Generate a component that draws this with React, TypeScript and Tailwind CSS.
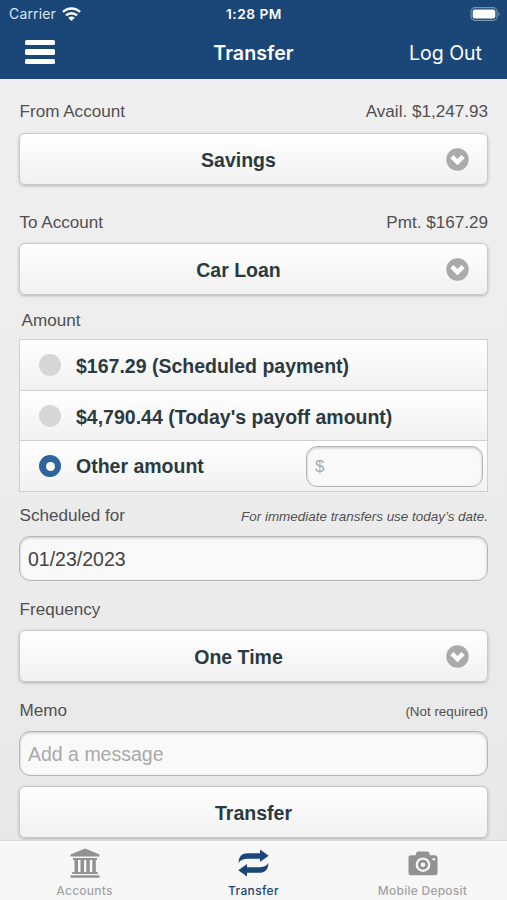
import type { ReactNode } from 'react';

function SelectIcon() {
  return (
    <svg className="h-[23px] w-[23px]" viewBox="0 0 23 23">
      <circle cx="11.5" cy="11.5" r="11.2" fill="#aaaaaa" />
      <path d="M5.9 8.7 L11.5 14.1 L17.1 8.7" fill="none" stroke="#fff" strokeWidth="4.4" />
    </svg>
  );
}

function FieldLabel({ text, children }: { text: string; children?: ReactNode }) {
  return (
    <div className="flex h-5 items-center justify-between pl-[0.5px] text-[17.1px] leading-5 whitespace-nowrap">
      <span>{text}</span>
      {children}
    </div>
  );
}

function SelectButton({ text, icon = true }: { text: string; icon?: boolean }) {
  return (
    <button className="grid h-[52px] w-full shrink-0 grid-cols-[1fr_auto_1fr] items-center rounded-[6px] border border-[#c9c9c9] bg-linear-to-b from-white to-[#f1f1f1] text-[19.5px] leading-6 font-bold text-[#2b3a40] shadow-[0_1px_3px_rgba(0,0,0,0.25)]">
      <span />
      <span className={icon ? 'pt-px pr-[30px]' : 'pt-px'}>{text}</span>
      {icon ? (
        <span className="flex justify-end pr-[18px]">
          <SelectIcon />
        </span>
      ) : (
        <span />
      )}
    </button>
  );
}

function Option({ text, checked, children }: { text: string; checked?: boolean; children?: ReactNode }) {
  return (
    <div className="flex flex-1 items-center border-b border-[#cfcfcf] bg-linear-to-b from-white to-[#f1f1f1] pr-[4px] pl-[19px] last:border-b-0">
      {checked ? (
        <span className="flex h-[22px] w-[22px] items-center justify-center rounded-full bg-[#2c6599]">
          <span className="h-[9px] w-[9px] rounded-full bg-white" />
        </span>
      ) : (
        <span className="h-[22px] w-[22px] rounded-full bg-[#d6d6d6]" />
      )}
      <span className={`ml-[15px] flex-1 text-[19.5px] leading-6 font-bold whitespace-nowrap text-[#2b3a40] ${checked ? '' : 'pt-[2px]'}`}>{text}</span>
      {children}
    </div>
  );
}

function Tab({ text, active, children }: { text: string; active?: boolean; children: ReactNode }) {
  return (
    <div className={`flex flex-1 flex-col items-center pt-[6px] ${active ? 'text-[#1a4777]' : 'text-[#a3a3a3]'}`}>
      <div className="flex h-8 items-center">{children}</div>
      <span
        className={`mt-1 text-[12px] leading-4 font-medium whitespace-nowrap ${active ? 'tracking-[0.35px]' : 'tracking-[0.25px]'}`}
      >
        {text}
      </span>
    </div>
  );
}

export default function App() {
  return (
    <div className="flex h-[900px] w-[507px] flex-col overflow-hidden bg-linear-to-b from-[#f0f0f0] to-[#e8e8e8] font-['Liberation_Sans',Arial,sans-serif] text-[#505050]">
      <header className="flex h-[79px] shrink-0 flex-col bg-[#1a4777] font-[Inter,sans-serif] text-white">
        <div className="grid h-[27px] grid-cols-3 items-center pr-[6px] pl-[9px] text-[13.7px] leading-4">
          <div className="flex items-center gap-[6px] text-[#dbe4ed]">
            <span className="text-[14px] tracking-[0.15px]">Carrier</span>
            <svg className="h-[14px] w-[19px]" viewBox="0 0 19 14" fill="none" stroke="#fff" strokeWidth="2.5">
              <path d="M1 5 C5.7 0.2 13.3 0.2 18 5" />
              <path d="M4 8.4 C7 5.4 12 5.4 15 8.4" />
              <path d="M6.2 10.8 Q9.5 8 12.8 10.8 L9.5 14 Z" fill="#fff" stroke="none" />
            </svg>
          </div>
          <span className="pr-[2px] text-center font-semibold tracking-[0.5px] whitespace-nowrap">1:28 PM</span>
          <svg className="h-[14px] w-[31px] justify-self-end" viewBox="0 0 31 14">
            <rect x="1" y="0.7" width="26" height="12.6" rx="3.8" fill="none" stroke="#7792ae" strokeWidth="1.2" />
            <rect x="2.7" y="2.4" width="22.6" height="9.2" rx="2" fill="#fff" />
            <path d="M28.5 4.5 Q31 7 28.5 9.5 Z" fill="#7792ae" />
          </svg>
        </div>
        <div className="grid h-[51px] grid-cols-3 items-center pr-[25px] pl-[25px]">
          <div className="flex w-[30px] flex-col gap-[4px] pb-px">
            <span className="h-[5.5px] rounded-[1.5px] bg-white" />
            <span className="h-[5.5px] rounded-[1.5px] bg-white" />
            <span className="h-[5.5px] rounded-[1.5px] bg-white" />
          </div>
          <h1 className="text-center text-[19.7px] leading-6 font-semibold">Transfer</h1>
          <span className="text-right text-[19.5px] leading-6">Log Out</span>
        </div>
      </header>

      <main className="flex min-h-0 flex-1 flex-col overflow-hidden px-[19px] pt-[23px]">
        <FieldLabel text="From Account">
          <span>Avail. $1,247.93</span>
        </FieldLabel>
        <div className="h-[11px] shrink-0" />
        <SelectButton text="Savings" />
        <div className="h-[28px] shrink-0" />
        <FieldLabel text="To Account">
          <span>Pmt. $167.29</span>
        </FieldLabel>
        <div className="h-[10px] shrink-0" />
        <SelectButton text="Car Loan" />
        <div className="mt-4 pl-[2px]">
          <FieldLabel text="Amount" />
        </div>
        <div className="mt-2 flex h-[153px] shrink-0 flex-col border border-[#cfcfcf]">
          <Option text="$167.29 (Scheduled payment)" />
          <Option text="$4,790.44 (Today's payoff amount)" />
          <Option text="Other amount" checked>
            <div className="flex h-[41px] w-[177px] items-center rounded-[11px] border-[1.5px] border-[#b5b5b5] bg-[#f9f9f9] pt-px pl-2 text-[17px] text-[#a9a9a9] shadow-[inset_0_1px_3px_rgba(0,0,0,0.2)]">
              $
            </div>
          </Option>
        </div>
        <div className="h-[14px] shrink-0" />
        <FieldLabel text="Scheduled for">
          <span className="pt-[2px] text-[13.45px] italic">For immediate transfers use today’s date.</span>
        </FieldLabel>
        <div className="mt-[10px] flex h-[45px] shrink-0 items-center rounded-[11px] border-[1.5px] border-[#b5b5b5] bg-[#f9f9f9] pt-[2px] pl-2 text-[19.5px] text-[#444] shadow-[inset_0_1px_3px_rgba(0,0,0,0.2)]">
          01/23/2023
        </div>
        <div className="h-[19px] shrink-0" />
        <FieldLabel text="Frequency" />
        <div className="h-[10px] shrink-0" />
        <SelectButton text="One Time" />
        <div className="h-[19px] shrink-0" />
        <FieldLabel text="Memo">
          <span className="pt-[2px] text-[13.4px]">(Not required)</span>
        </FieldLabel>
        <div className="mt-[10px] flex h-[45px] shrink-0 items-center rounded-[11px] border-[1.5px] border-[#b5b5b5] bg-[#f9f9f9] pt-[2px] pl-2 text-[19.5px] text-[#a9a9a9] shadow-[inset_0_1px_3px_rgba(0,0,0,0.2)]">
          Add a message
        </div>
        <div className="h-[10px] shrink-0" />
        <SelectButton text="Transfer" icon={false} />
      </main>

      <nav className="flex h-[60px] shrink-0 border-t border-[#d9d9d9] bg-[#f7f7f7] font-[Inter,sans-serif]">
        <Tab text="Accounts">
          <svg className="h-[30px] w-[30px]" viewBox="0 0 30 30" fill="#929292">
            <path d="M15 0.5 L29.5 6.5 V8.5 H0.5 V6.5 Z" />
            <path d="M3 10 H27 V12 H3 Z M4.5 12 H8 V24 H4.5 Z M10.5 12 H14 V24 H10.5 Z M16.3 12 H19.8 V24 H16.3 Z M22.3 12 H25.8 V24 H22.3 Z M2.2 24 H27.8 V26 H2.2 Z M0.5 27.3 H29.5 V29.7 H0.5 Z" />
          </svg>
        </Tab>
        <Tab text="Transfer" active>
          <svg className="h-[28px] w-[31px]" viewBox="0 0 31 28" fill="#1a4777">
            <path d="M0.5 14 C1 7 4 4.2 10 4.2 H22 V0.5 L30.7 6.8 L22 13 V9.7 H10 C5.5 9.7 2.5 11 0.5 14 Z" />
            <path d="M30.5 14 C30 21 27 23.8 21 23.8 H9 V27.5 L0.3 21.2 L9 15 V18.3 H21 C25.5 18.3 28.5 17 30.5 14 Z" />
          </svg>
        </Tab>
        <Tab text="Mobile Deposit">
          <svg className="h-[25px] w-[30px]" viewBox="0 0 30 25" fill="#929292">
            <path d="M10 0.5 H19.5 Q21 0.5 21.3 2 L22 4.3 H27 Q29.5 4.3 29.5 6.8 V21.7 Q29.5 24.2 27 24.2 H3 Q0.5 24.2 0.5 21.7 V6.8 Q0.5 4.3 3 4.3 H7.5 L8.3 2 Q8.7 0.5 10 0.5 Z" />
            <circle cx="15" cy="13.7" r="7.3" fill="#f7f7f7" />
            <circle cx="15" cy="13.7" r="5" />
            <circle cx="15" cy="13.7" r="2.3" fill="#f7f7f7" />
            <circle cx="25.8" cy="8.3" r="1.3" fill="#f7f7f7" />
          </svg>
        </Tab>
      </nav>
    </div>
  );
}
